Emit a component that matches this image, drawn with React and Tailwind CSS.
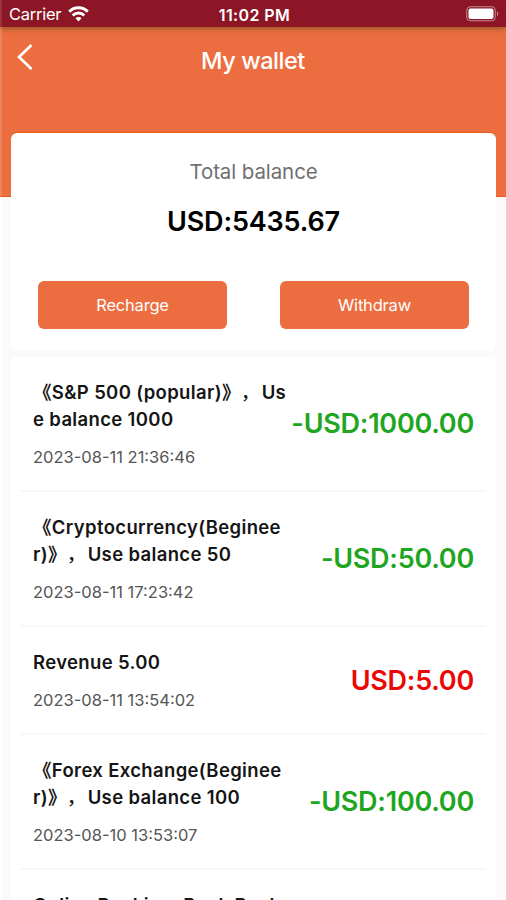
import React from 'react';

const transactions = [
  { id: 1, lines: ['《S&P 500 (popular)》，Us', 'e balance 1000'], date: '2023-08-11 21:36:46', amount: '-USD:1000.00' },
  { id: 2, lines: ['《Cryptocurrency(Beginee', 'r)》，Use balance 50'], date: '2023-08-11 17:23:42', amount: '-USD:50.00' },
  { id: 3, lines: ['Revenue 5.00'], date: '2023-08-11 13:54:02', amount: 'USD:5.00' },
  { id: 4, lines: ['《Forex Exchange(Beginee', 'r)》，Use balance 100'], date: '2023-08-10 13:53:07', amount: '-USD:100.00' },
  { id: 5, lines: ['Online Banking, Bank Bank'] },
];

function WifiIcon() {
  return (
    <svg width="21" height="16" viewBox="0 0 21 16" fill="none" stroke="white" strokeWidth="2.9">
      <path d="M1.2 5.6a13.2 13.2 0 0 1 18.6 0" />
      <path d="M4.7 9.4a8.2 8.2 0 0 1 11.6 0" />
      <path d="M10.5 15.4 7.5 12.3a4.2 4.2 0 0 1 6 0Z" fill="white" stroke="none" />
    </svg>
  );
}

function BatteryIcon() {
  return (
    <svg width="34" height="16" viewBox="0 0 34 16">
      <rect x="0.75" y="0.75" width="28.5" height="14" rx="3.5" fill="none" stroke="white" strokeOpacity="0.5" />
      <rect x="2.5" y="2.5" width="25" height="10.5" rx="2" fill="white" />
      <path d="M31 5.5c1.6.6 1.6 4 0 4.6Z" fill="white" fillOpacity="0.5" />
    </svg>
  );
}

function StatusBar() {
  return (
    <div className="relative z-10 grid h-[27px] grid-cols-3 items-center bg-[#8c1625] pr-1.5 pl-[9px] text-white shadow-[0_1px_6px_rgba(60,60,0,0.6),inset_2px_0_0_rgba(255,255,255,0.12)]">
      <div className="flex items-center gap-[7px]">
        <span className="pt-0.5 text-[16.5px] tracking-[-0.25px]">Carrier</span>
        <WifiIcon />
      </div>
      <div className="pt-0.5 text-center text-[16px] font-semibold tracking-[0.4px]">11:02 PM</div>
      <div className="flex justify-end">
        <BatteryIcon />
      </div>
    </div>
  );
}

// full-width commas are lighter than the rest of the title
function TitleLine({ text }) {
  return (
    <p>
      {text.split(/(，)/).map((part, i) =>
        part === '，' ? (
          <span key={i} className="mr-[2px] font-medium">{part}</span>
        ) : (
          part
        )
      )}
    </p>
  );
}

function Transaction({ item }) {
  return (
    <div className="flex items-center justify-between border-b-2 border-[#f7f7f7] pt-[22px] pr-3 pb-[21px] pl-3">
      <div className="whitespace-nowrap">
        <div className="text-[18.5px] leading-[27px] font-semibold tracking-[0.35px] text-[#151515] [text-spacing-trim:space-all]">
          {item.lines.map((line) => (
            <TitleLine key={line} text={line} />
          ))}
        </div>
        {item.date && (
          <p className="mt-3 text-[16.5px] leading-6 text-[#555]">{item.date}</p>
        )}
      </div>
      {item.amount && (
        <div
          className={`text-[27px] leading-8 font-semibold tracking-[-0.25px] whitespace-nowrap ${
            item.amount.startsWith('-') ? 'text-[#1fa51f]' : 'text-[#ec0606]'
          }`}
        >
          {item.amount}
        </div>
      )}
    </div>
  );
}

function App() {
  return (
    <div className="h-[900px] w-[506px] overflow-hidden bg-[#fafafa] font-['Inter','Noto_Sans_CJK_SC',sans-serif] shadow-[inset_2px_0_0_#fff]">
      <StatusBar />

      <header className="grid h-[170px] grid-cols-[48px_1fr_48px] items-start border-b border-[#ea5d17] bg-[#ec6e40] text-white shadow-[inset_2px_0_0_rgba(255,255,255,0.15)]">
        <svg className="mt-4 ml-4" width="18" height="28" viewBox="0 0 18 28" fill="none" stroke="white" strokeWidth="2.7">
          <path d="M15.5 2 3 14l12.5 12" />
        </svg>
        <h1 className="mt-[18px] text-center text-[23.5px] leading-8 font-medium tracking-[-0.45px]">My wallet</h1>
      </header>

      <main className="relative -mt-16 px-[11px] pr-[10px]">
        <section className="h-[218px] rounded-md bg-white px-[27px] pt-[23px] text-center shadow-[0_-1px_0_#ea5d17]">
          <p className="text-[20.5px] leading-8 tracking-[-0.1px] text-[#707070]">Total balance</p>
          <p className="mt-[18px] text-[27px] leading-8 font-semibold tracking-[-0.15px] text-black">USD:5435.67</p>
          <div className="mt-[43px] flex justify-between">
            <button className="h-12 w-[189px] rounded-md bg-[#ec6e40] text-[16.5px] tracking-[-0.2px] text-white">Recharge</button>
            <button className="h-12 w-[189px] rounded-md bg-[#ec6e40] text-[16.5px] tracking-[-0.2px] text-white">Withdraw</button>
          </div>
        </section>

        <section className="mt-[6px] rounded-md bg-white px-[10px]">
          {transactions.map((item) => (
            <Transaction key={item.id} item={item} />
          ))}
        </section>
      </main>
    </div>
  );
}

export default App;
